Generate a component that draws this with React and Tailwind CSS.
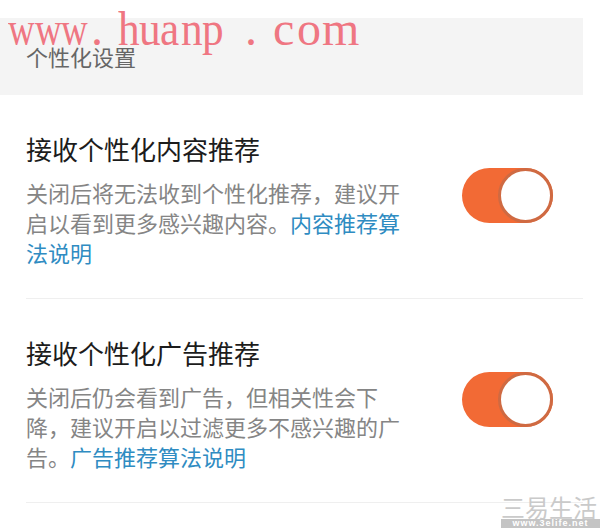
const cjk = { fontFamily: '"Noto Sans CJK SC", "Noto Sans", sans-serif' };

const mark = [
  ['w', 'w-[26.7px] origin-left scale-x-[0.77]'],
  ['w', 'w-[26.7px] origin-left scale-x-[0.77]'],
  ['w', 'w-[26.7px] origin-left scale-x-[0.77]'],
  ['.', 'w-[30px] pl-[3px]'],
  ['h', 'w-[21px] origin-left scale-x-90'],
  ['u', 'w-[21px] origin-left scale-x-90'],
  ['a', 'w-[21px] origin-left scale-x-90'],
  ['n', 'w-[21px] origin-left scale-x-90'],
  ['p', 'w-[21px] origin-left scale-x-90'],
  ['.', 'w-[50px] pl-[22px]'],
  ['c', 'w-[24px]'],
  ['o', 'w-[25px]'],
  ['m', 'w-[38px]'],
];

function Toggle() {
  return (
    <div className="relative mt-[33px] h-[55px] w-[91px] shrink-0 rounded-full bg-[#f26a35]">
      <div className="absolute right-0 top-0 h-[55px] w-[55px] rounded-full border-[3px] border-[#cf6a42] bg-white"></div>
    </div>
  );
}

function Item({ title, text, link }) {
  return (
    <div className="pl-[26px]">
      <div className="flex items-start border-b border-[#efefef] pb-[31px] pr-[30px] pt-[40px]">
        <div className="flex-1">
          <div className="text-[26px] leading-[28px] text-[#1c1c1c]">{title}</div>
          <p className="mt-[14px] w-[376px] text-[22px] leading-[30px] text-[#858585]">
            {text}
            <span className="text-[#2f8cc2]">{link}</span>
          </p>
        </div>
        <Toggle />
      </div>
    </div>
  );
}

export default function App() {
  return (
    <div className="relative h-[528px] w-[600px] overflow-hidden bg-white" style={cjk}>
      <div className="w-[583px] pt-[18px]">
        <div className="flex h-[77px] items-center bg-[#f4f4f4] pl-[26px] text-[22px] text-[#666666]">
          个性化设置
        </div>
        <Item
          title="接收个性化内容推荐"
          text="关闭后将无法收到个性化推荐，建议开启以看到更多感兴趣内容。"
          link="内容推荐算法说明"
        />
        <Item
          title="接收个性化广告推荐"
          text="关闭后仍会看到广告，但相关性会下降，建议开启以过滤更多不感兴趣的广告。"
          link="广告推荐算法说明"
        />
      </div>

      {/* watermark */}
      <div
        className="absolute left-[8px] top-[5px] flex text-[48px] leading-none text-[#ef7682]"
        style={{ fontFamily: '"Liberation Serif", serif' }}
      >
        {mark.map(([c, cls], i) => (
          <span key={i} className={`inline-block shrink-0 ${cls}`}>{c}</span>
        ))}
      </div>

      {/* corner logo */}
      <div className="absolute left-[501px] top-[495px] flex w-[99px] flex-col items-start">
        <span className="text-[24px] leading-[23px] text-[#cacaca]">三易生活</span>
        <span
          className="mt-[1px] w-[99px] overflow-hidden whitespace-nowrap bg-[#c4c4c4] text-center text-[9px] font-bold leading-[9px] tracking-[1px] text-white"
          style={{ fontFamily: '"Liberation Sans", sans-serif' }}
        >
          www.3elife.net
        </span>
      </div>
    </div>
  );
}
